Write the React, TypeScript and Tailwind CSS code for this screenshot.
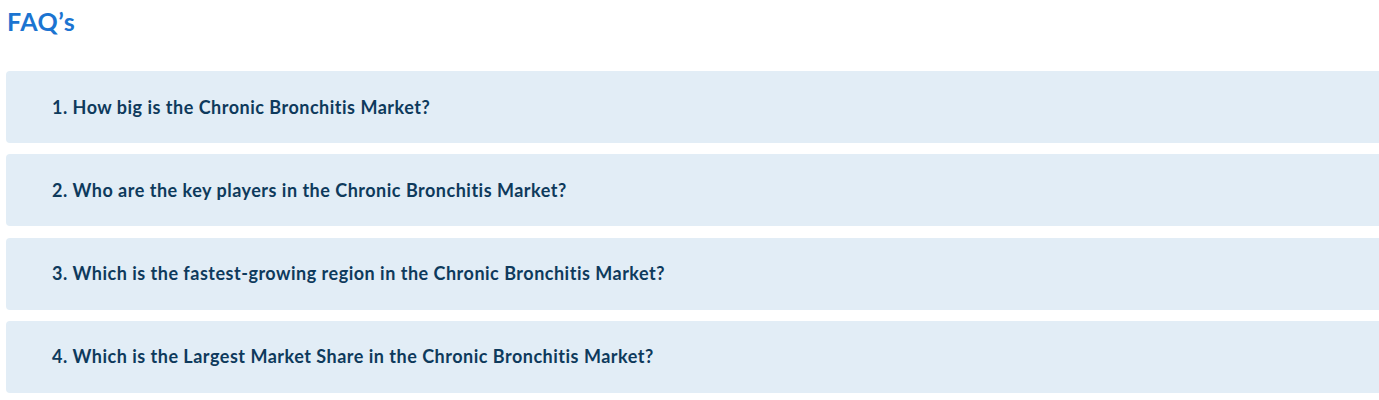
import React from "react";

const faqs = [
  "1. How big is the Chronic Bronchitis Market?",
  "2. Who are the key players in the Chronic Bronchitis Market?",
  "3. Which is the fastest-growing region in the Chronic Bronchitis Market?",
  "4. Which is the Largest Market Share in the Chronic Bronchitis Market?",
];

export default function App() {
  return (
    <div
      className="w-[1379px] h-[400px] overflow-hidden bg-white"
      style={{ fontFamily: "Lato, 'Open Sans', sans-serif" }}
    >
      <h2 className="pl-[7px] pt-[7px] text-[25px] leading-[28px] font-bold text-[#1b74d1] tracking-[0.5px]">
        FAQ’s
      </h2>
      <div className="mt-[36px] pl-[6px] flex flex-col gap-[11.33px]">
        {faqs.map((q) => (
          <div
            key={q}
            className="h-[72px] w-[1400px] rounded-[4px] bg-[#e2edf6] flex items-center pl-[46px]"
          >
            <span className="text-[18px] font-bold text-[#0e3a5c] tracking-[0.5px]">
              {q}
            </span>
          </div>
        ))}
      </div>
    </div>
  );
}
